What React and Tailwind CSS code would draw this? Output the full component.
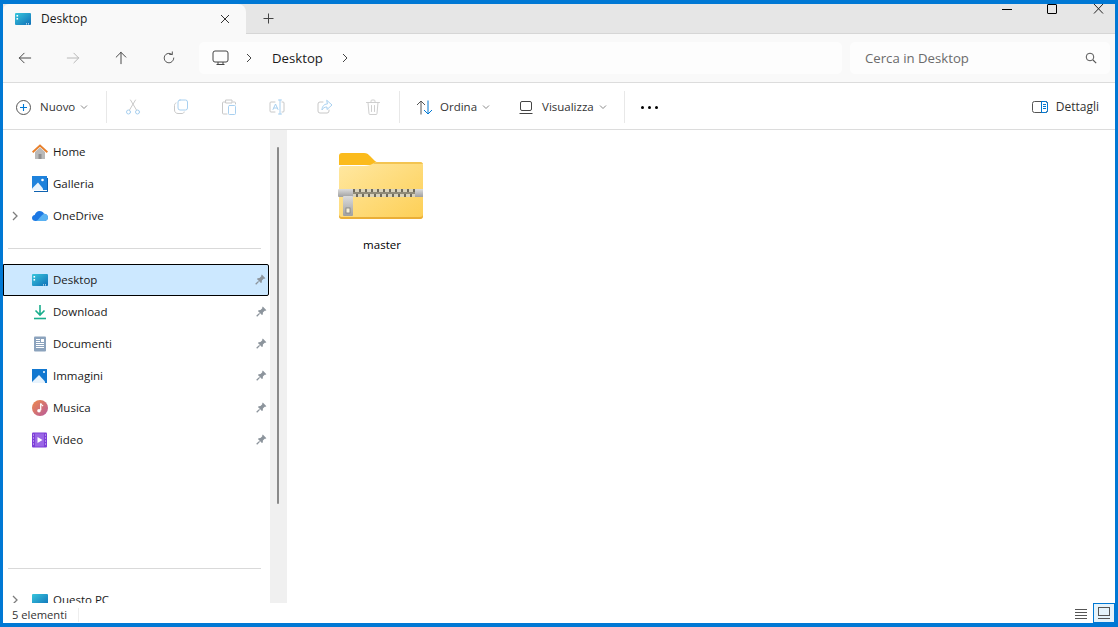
import React from 'react';

const font = { fontFamily: '"Open Sans", "Noto Sans", sans-serif' };

// --- small line icons ---
const Line = ({ size = 16, children, className = '' }) => (
  <svg width={size} height={size} viewBox="0 0 16 16" fill="none" strokeLinecap="round" strokeLinejoin="round" className={className}>
    {children}
  </svg>
);

const NavArrow = ({ dir, color }) => {
  const paths = {
    left: 'M14.5 8H1.5M7 2.5 1.5 8 7 13.5',
    right: 'M1.5 8h13M9 2.5 14.5 8 9 13.5',
    up: 'M8 14.5V1.5M2.5 7 8 1.5 13.5 7',
  };
  return <Line size={14}><path d={paths[dir]} stroke={color} strokeWidth="1.1" /></Line>;
};

const Chevron = () => (
  <svg width="8" height="8" viewBox="0 0 8 8" fill="none" className="ml-[5px]">
    <path d="M1 2.5 4 5.5 7 2.5" stroke="#8a8a8a" strokeWidth="1" />
  </svg>
);

const CrumbChevron = ({ className = '' }) => (
  <svg width="6" height="10" viewBox="0 0 6 10" fill="none" className={className}>
    <path d="M1 1 5 5 1 9" stroke="#444" strokeWidth="1" />
  </svg>
);

const Pin = ({ active }) => (
  <svg width="11" height="11" viewBox="0 0 11 11" className={`absolute ${active ? 'right-[2px] top-[9px]' : 'right-[3px] top-[10px]'}`}>
    <path d="M6.8.6 10.4 4.2 9.5 4.8 8.7 4.7 6.9 6.6 6.8 8.4 5.9 9.1 1.9 5.1 2.7 4.2 4.5 4.1 6.3 2.3 6.2 1.5Z" fill="#8c949c" />
    <path d="M3.6 7.4.7 10.3" stroke="#8c949c" strokeWidth="1.3" />
  </svg>
);

// --- sidebar icons ---
const HomeIcon = () => (
  <svg width="16" height="16" viewBox="0 0 16 16">
    <path d="M3 8 8 3.5 13 8v7H3Z" fill="#b9b9b9" />
    <rect x="6.5" y="10" width="3" height="5" fill="#8f8f8f" />
    <path d="M.6 8.2 8 1.6l7.4 6.6" fill="none" stroke="#e8802c" strokeWidth="2" />
  </svg>
);

const GalleryIcon = () => (
  <svg width="16" height="16" viewBox="0 0 16 16">
    <rect x="0" y="0" width="15" height="14" fill="#1e82dc" />
    <path d="M0 12.5 6 6.5l5 6V14H0Z" fill="#e8f3fc" />
    <circle cx="10.5" cy="4" r="1.3" fill="#fff" />
    <path d="M16 2v14H2v-1h13V2Z" fill="#0f62b0" />
  </svg>
);

const CloudIcon = () => (
  <svg width="16" height="16" viewBox="0 0 16 16">
    <path d="M3.5 13C1.5 13 0 11.7 0 10 0 8.5 1.2 7.3 2.7 7.1 3.3 4.7 5.2 3 7.6 3c2 0 3.6 1 4.4 2.8 2.2 0 4 1.6 4 3.7 0 2-1.6 3.5-3.7 3.5Z" fill="#1c78e4" />
    <path d="M3.5 13c3 0 4-4.500 8.500-7.200 2.200 0 4 1.600 4 3.700 0 2-1.600 3.500-3.700 3.500Z" fill="#59b2f2" />
  </svg>
);

const DesktopIcon = ({ plain }) => (
  <svg width="16" height="16" viewBox="0 0 16 16">
    <defs>
      <linearGradient id="dsk" x1="0" y1="0" x2="1" y2="1">
        <stop offset="0" stopColor="#38c6dc" />
        <stop offset="1" stopColor="#0f6fb8" />
      </linearGradient>
    </defs>
    <rect x="0" y="2" width="16" height="12" rx="1" fill="url(#dsk)" />
    {!plain && (
      <>
        <rect x="1.5" y="4" width="1.6" height="1.6" fill="#fff" />
        <rect x="1.5" y="7" width="1.6" height="1.6" fill="#fff" />
        <rect x="11" y="12.4" width="1" height="1" fill="#fff" />
        <rect x="13" y="12.4" width="1" height="1" fill="#fff" />
      </>
    )}
  </svg>
);

const PcIcon = () => <DesktopIcon plain />;

const DownloadIcon = () => (
  <svg width="16" height="16" viewBox="0 0 16 16" fill="none">
    <path d="M8 1v9.5M3.5 6.5 8 11l4.5-4.5" stroke="#19ad8c" strokeWidth="1.6" />
    <path d="M2 14.5h12" stroke="#19ad8c" strokeWidth="1.6" />
  </svg>
);

const DocIcon = () => (
  <svg width="16" height="16" viewBox="0 0 16 16">
    <rect x="2" y="0.5" width="12" height="15" rx="1" fill="#8ca3bd" />
    <path d="M4 3.5h4M4 5.5h4M4 7.5h8M4 9.5h8M4 11.5h8" stroke="#fff" strokeWidth="1" />
    <rect x="9" y="3" width="3" height="3" fill="#fff" />
  </svg>
);

const PicsIcon = () => (
  <svg width="16" height="16" viewBox="0 0 16 16">
    <rect x="0" y="1" width="15" height="14" fill="#1278d0" />
    <path d="M0 14 7 7l6 6.5V15H0Z" fill="#e8f3fc" />
    <circle cx="12" cy="4" r="1" fill="#fff" />
  </svg>
);

const MusicIcon = () => (
  <svg width="16" height="16" viewBox="0 0 16 16">
    <defs>
      <linearGradient id="msc" x1="0" y1="0" x2="1" y2="1">
        <stop offset="0" stopColor="#ee8a4a" />
        <stop offset="1" stopColor="#b85a9c" />
      </linearGradient>
    </defs>
    <circle cx="8" cy="8" r="8" fill="url(#msc)" />
    <path d="M8.7 3.5v6.7" stroke="#fff" strokeWidth="1.3" />
    <path d="M8.7 3.5c.5 1.4 1.7 1.6 2.3 2.6" stroke="#fff" strokeWidth="1.1" fill="none" />
    <circle cx="7" cy="10.7" r="1.8" fill="#fff" />
  </svg>
);

const VideoIcon = () => (
  <svg width="16" height="16" viewBox="0 0 16 16">
    <rect x="0" y="0.5" width="15" height="15" rx="1" fill="#7d3fd8" />
    <rect x="3" y="1.5" width="9" height="13" fill="#9a66e6" />
    <path d="M5.5 5v6l5-3Z" fill="#fff" />
    <path d="M1 3h1M1 6h1M1 9h1M1 12h1M13 3h1M13 6h1M13 9h1M13 12h1" stroke="#e5d8fa" strokeWidth="1.2" />
  </svg>
);

const ExpandChevron = () => (
  <svg width="7" height="10" viewBox="0 0 7 10" fill="none" className="absolute left-[9px] top-[11px]">
    <path d="M1 1 5 5 1 9" stroke="#7d7d7d" strokeWidth="1.3" />
  </svg>
);

const navTop = [
  { label: 'Home', icon: HomeIcon },
  { label: 'Galleria', icon: GalleryIcon },
  { label: 'OneDrive', icon: CloudIcon, expand: true },
];

const navPinned = [
  { label: 'Desktop', icon: DesktopIcon, active: true },
  { label: 'Download', icon: DownloadIcon },
  { label: 'Documenti', icon: DocIcon },
  { label: 'Immagini', icon: PicsIcon },
  { label: 'Musica', icon: MusicIcon },
  { label: 'Video', icon: VideoIcon },
];

const NavRow = ({ item, pinned }) => {
  const Icon = item.icon;
  return (
    <div className={`relative h-[32px] flex items-center text-[11.5px] text-[#1a1a1a] ${item.active ? 'bg-[#cce8ff] border border-black rounded-r-[2px] pl-[28px] mr-[1px]' : 'pl-[29px]'}`}>
      {item.expand && <ExpandChevron />}
      <Icon />
      <span className="ml-[5px]">{item.label}</span>
      {pinned && <Pin active={item.active} />}
    </div>
  );
};

const ToolBtn = ({ children }) => (
  <div className="w-[48px] h-[32px] flex items-center justify-center">{children}</div>
);

const Sep = ({ className = '' }) => <div className={`w-px h-[32px] bg-[#e8e8e8] ${className}`} />;

const teeth = Array.from({ length: 22 }, (_, i) => 15 + i * 3);

const FolderZip = () => (
  <svg width="86" height="68" viewBox="0 0 86 68">
    <defs>
      <linearGradient id="fld" x1="0" y1="0" x2="1" y2="1">
        <stop offset="0" stopColor="#ffe8a2" />
        <stop offset="1" stopColor="#fdcf55" />
      </linearGradient>
      <linearGradient id="zip" x1="0" y1="0" x2="0" y2="1">
        <stop offset="0" stopColor="#dcdcdc" />
        <stop offset="1" stopColor="#a0a0a0" />
      </linearGradient>
    </defs>
    <path d="M1 4a3 3 0 0 1 3-3h22c3 0 4 1 6 3l5 5 6 4H1Z" fill="#fbbb1c" />
    <path d="M1 64V17a3 3 0 0 1 3-3h22c4 0 7-1 10-3l2-1h44a3 3 0 0 1 3 3v51a3 3 0 0 1-3 3H4a3 3 0 0 1-3-3Z" fill="url(#fld)" />
    <path d="M1 62v2a3 3 0 0 0 3 3h78a3 3 0 0 0 3-3v-2a3 3 0 0 1-3 3H4a3 3 0 0 1-3-3Z" fill="#eaae36" />
    <path d="M38 10h44a3 3 0 0 1 3 2H35Z" fill="#f3c451" />
    <rect x="14" y="37" width="64" height="8" fill="#d9d3bd" />
    {teeth.map((x, i) => (
      <rect key={x} x={x} y={i % 2 ? 41 : 37} width="2" height="4" fill="#6e6a5c" />
    ))}
    <path d="M14 41h64" stroke="#8f8a78" strokeWidth="2" />
    <rect x="77" y="37" width="8" height="8" fill="url(#zip)" />
    <rect x="0" y="37" width="15" height="8" rx="1" fill="url(#zip)" />
    <rect x="5" y="44" width="10" height="20" rx="1" fill="url(#zip)" />
    <rect x="8" y="56" width="4" height="5" fill="#f5efd9" stroke="#7f7f7f" strokeWidth="0.8" />
  </svg>
);

export default function App() {
  return (
    <div style={font} className="w-[1118px] h-[627px] overflow-hidden flex flex-col bg-white border-[#0078d4] border-t-[4px] border-b-[4px] border-x-[3px] text-[#1a1a1a]">

      {/* Tab strip */}
      <div className="h-[30px] shrink-0 flex bg-[#e6e6e6] border-b border-[#d6d6d6]">
        <div className="w-[243px] h-[30px] bg-[#f9f9f9] rounded-tl-[6px] rounded-tr-[8px] flex items-center pl-[12px] relative z-10">
          <DesktopIcon />
          <span className="ml-[10px] text-[12px] font-medium">Desktop</span>
          <svg width="10" height="10" viewBox="0 0 10 10" className="ml-auto mr-[16px]" fill="none">
            <path d="M1 1l8 8M9 1 1 9" stroke="#333" strokeWidth="1" />
          </svg>
        </div>
        <div className="ml-[17px] flex items-center">
          <svg width="11" height="11" viewBox="0 0 11 11" fill="none">
            <path d="M5.5 .5v10M.5 5.5h10" stroke="#444" strokeWidth="1" />
          </svg>
        </div>
        <div className="ml-auto flex items-start">
          <div className="w-[10px] h-px bg-black mt-[5px]" />
          <div className="w-[10px] h-[10px] border border-black rounded-[1px] ml-[35px]" />
          <svg width="11" height="10" viewBox="0 0 11 10" fill="none" className="ml-[36px] mr-[11px]">
            <path d="M1 0l9 9.5M10 0 1 9.5" stroke="#222" strokeWidth="1" />
          </svg>
        </div>
      </div>

      {/* Address row */}
      <div className="h-[49px] shrink-0 flex items-center bg-[#f9f9f9] border-b border-[#dcdcdc]">
        <div className="w-[198px] -ml-[2px] flex">
          <ToolBtn><NavArrow dir="left" color="#444" /></ToolBtn>
          <ToolBtn><NavArrow dir="right" color="#b5b5b5" /></ToolBtn>
          <ToolBtn><NavArrow dir="up" color="#444" /></ToolBtn>
          <ToolBtn>
            <Line size={14}>
              <path d="M13.5 8a5.5 5.5 0 1 1-2-4.2" stroke="#555" strokeWidth="1.1" />
              <path d="M11.8 1v3h-3" stroke="#555" strokeWidth="1.1" />
            </Line>
          </ToolBtn>
        </div>
        <div className="w-[643px] h-[32px] bg-[#fdfdfd] rounded-[5px] flex items-center pl-[13px] text-[13.2px]">
          <svg width="17" height="16" viewBox="0 0 17 16" fill="none">
            <rect x="1" y="1" width="15" height="11" rx="2" stroke="#444" strokeWidth="1" />
            <path d="M6 12v2.5M11 12v2.5M4.5 14.5h8" stroke="#444" strokeWidth="1" />
          </svg>
          <CrumbChevron className="ml-[17px]" />
          <span className="ml-[20px] pt-px">Desktop</span>
          <CrumbChevron className="ml-[19px]" />
        </div>
        <div className="ml-[8px] w-[260px] h-[32px] bg-[#fdfdfd] rounded-[5px] flex items-center pl-[15px] pr-[13px] text-[13.2px] text-[#6b6b6b]">
          <span className="pt-px">Cerca in Desktop</span>
          <svg width="12" height="12" viewBox="0 0 12 12" fill="none" className="ml-auto">
            <circle cx="5" cy="5" r="3.8" stroke="#555" strokeWidth="1" />
            <path d="M8 8l3.2 3.2" stroke="#555" strokeWidth="1.1" />
          </svg>
        </div>
      </div>

      {/* Command bar */}
      <div className="h-[47px] shrink-0 flex items-center pt-[2px] border-b border-[#dcdcdc] bg-white text-[11.5px] text-[#333]">
        <div className="flex items-center pl-[13px] w-[103px]">
          <svg width="15" height="15" viewBox="0 0 15 15" fill="none">
            <circle cx="7.5" cy="7.5" r="7" stroke="#555" strokeWidth="1" />
            <path d="M7.5 4v7M4 7.5h7" stroke="#0078d4" strokeWidth="1.1" />
          </svg>
          <span className="ml-[9px]">Nuovo</span>
          <Chevron />
        </div>
        <Sep />
        <div className="w-[2px]" />
        <ToolBtn>
          <Line>
            <circle cx="3.5" cy="13" r="2" stroke="#a8d0f0" />
            <circle cx="12.5" cy="13" r="2" stroke="#a8d0f0" />
            <path d="M4.5 11 10.5 1M11.5 11 5.5 1" stroke="#c8c8c8" />
          </Line>
        </ToolBtn>
        <ToolBtn>
          <Line>
            <rect x="5" y="1" width="9.5" height="10" rx="2" stroke="#a8d0f0" />
            <path d="M3 4C2 4.5 1.5 5 1.5 6.5V11c0 2 1.5 3.5 3.5 3.5h4c1 0 2-.5 2.2-1.5" stroke="#c8c8c8" />
          </Line>
        </ToolBtn>
        <ToolBtn>
          <Line>
            <path d="M4 3H2.5a1 1 0 0 0-1 1v10a1 1 0 0 0 1 1H6M12 3h1.5a1 1 0 0 1 1 1v1M5 1h6v3H5Z" stroke="#c8c8c8" />
            <rect x="7.5" y="6.5" width="7" height="9" rx="1" stroke="#a8d0f0" />
          </Line>
        </ToolBtn>
        <ToolBtn>
          <Line>
            <path d="M6 3H2a1 1 0 0 0-1 1v8a1 1 0 0 0 1 1h4M13 3h1a1 1 0 0 1 1 1v8a1 1 0 0 1-1 1h-1" stroke="#c8c8c8" />
            <path d="M4 10.5 6.5 5 9 10.5M5 9h3M11 1v14M9.5 1h3M9.5 15h3" stroke="#a8d0f0" />
          </Line>
        </ToolBtn>
        <ToolBtn>
          <Line>
            <path d="M6 3H3a2 2 0 0 0-2 2v7a2 2 0 0 0 2 2h7a2 2 0 0 0 2-2v-1" stroke="#c8c8c8" />
            <path d="M10 1.5 15 6l-5 4.5V8C7.5 8 6 9 5 11c0-3.5 2-6 5-6Z" stroke="#a8d0f0" />
          </Line>
        </ToolBtn>
        <ToolBtn>
          <Line>
            <path d="M1.5 3.5h13M6 3.5V2a1 1 0 0 1 1-1h2a1 1 0 0 1 1 1v1.5M3 3.5l1 11a1 1 0 0 0 1 1h6a1 1 0 0 0 1-1l1-11M6.5 6.5v6M9.5 6.5v6" stroke="#cfcfcf" />
          </Line>
        </ToolBtn>
        <div className="w-[2px]" />
        <Sep />
        <div className="flex items-center ml-[16px]">
          <svg width="17" height="15" viewBox="0 0 17 15" fill="none">
            <path d="M5 14.5V1M1 5l4-4 4 4" stroke="#555" strokeWidth="1" />
            <path d="M12 .5V14M8 10l4 4 4-4" stroke="#0078d4" strokeWidth="1" />
          </svg>
          <span className="ml-[7px]">Ordina</span>
          <Chevron />
        </div>
        <div className="flex items-center ml-[29px]">
          <svg width="14" height="13" viewBox="0 0 14 13" fill="none">
            <rect x="1.5" y=".5" width="11" height="9" rx="1.5" stroke="#444" strokeWidth="1" />
            <path d="M.5 12.5h13" stroke="#444" strokeWidth="1" />
          </svg>
          <span className="ml-[9px]">Visualizza</span>
          <Chevron />
        </div>
        <Sep className="ml-[17px]" />
        <div className="ml-[16px] flex gap-[4px]">
          <div className="w-[3px] h-[3px] rounded-full bg-black" />
          <div className="w-[3px] h-[3px] rounded-full bg-black" />
          <div className="w-[3px] h-[3px] rounded-full bg-black" />
        </div>
        <div className="ml-auto mr-[16px] flex items-center">
          <svg width="16" height="12" viewBox="0 0 16 12" fill="none">
            <rect x=".5" y=".5" width="15" height="11" rx="2" stroke="#555" strokeWidth="1" />
            <path d="M9.5 .5h4a2 2 0 0 1 2 2v7a2 2 0 0 1-2 2h-4Z" stroke="#0078d4" strokeWidth="1" />
            <path d="M11 3.5h3M11 5.5h3M11 7.5h3" stroke="#0078d4" strokeWidth="1" />
          </svg>
          <span className="ml-[8px] text-[12px]">Dettagli</span>
        </div>
      </div>

      {/* Body */}
      <div className="flex-1 min-h-0 flex">
        <div className="w-[267px] shrink-0 overflow-hidden pt-[6px]">
          {navTop.map((item) => <NavRow key={item.label} item={item} />)}
          <div className="h-px bg-[#d9d9d9] ml-[5px] mr-[9px] mt-[16px] mb-[15px]" />
          {navPinned.map((item) => <NavRow key={item.label} item={item} pinned />)}
          <div className="h-px bg-[#d9d9d9] ml-[5px] mr-[9px] mt-[112px] mb-[15px]" />
          <NavRow item={{ label: 'Questo PC', icon: PcIcon, expand: true }} />
        </div>
        <div className="w-[16px] shrink-0 bg-[#f0f0f0] pt-[17px] pl-[7px]">
          <div className="w-[2px] h-[357px] bg-[#8a8a8a] rounded-full" />
        </div>
        <div className="flex-1 border-l border-[#f0f0f0] pl-[51px] pt-[22px]">
          <div className="w-[86px] flex flex-col items-center">
            <FolderZip />
            <span className="mt-[16px] ml-[2px] text-[11.5px] text-black">master</span>
          </div>
        </div>
      </div>

      {/* Status bar */}
      <div className="h-[20px] shrink-0 flex items-center bg-white text-[11.2px] pl-[9px] text-[#333]">
        <span className="mt-[4px]">5 elementi</span>
        <div className="w-px h-[14px] bg-[#eeeeee] ml-[11px] mt-[3px]" />
        <svg width="12" height="10" viewBox="0 0 12 10" fill="none" className="ml-auto mr-[6px] mt-[2px]">
          <path d="M0 .5h12M0 3.5h12M0 6.5h12M0 9.5h12" stroke="#555" strokeWidth="1" />
        </svg>
        <div className="w-[22px] h-[20px] bg-[#e5f3fb] border border-[#0078d4] flex items-center justify-center">
          <svg width="12" height="12" viewBox="0 0 12 12" fill="none">
            <rect x=".5" y=".5" width="11" height="8" stroke="#555" strokeWidth="1" />
            <path d="M0 11.5h12" stroke="#555" strokeWidth="1" />
          </svg>
        </div>
      </div>
    </div>
  );
}
